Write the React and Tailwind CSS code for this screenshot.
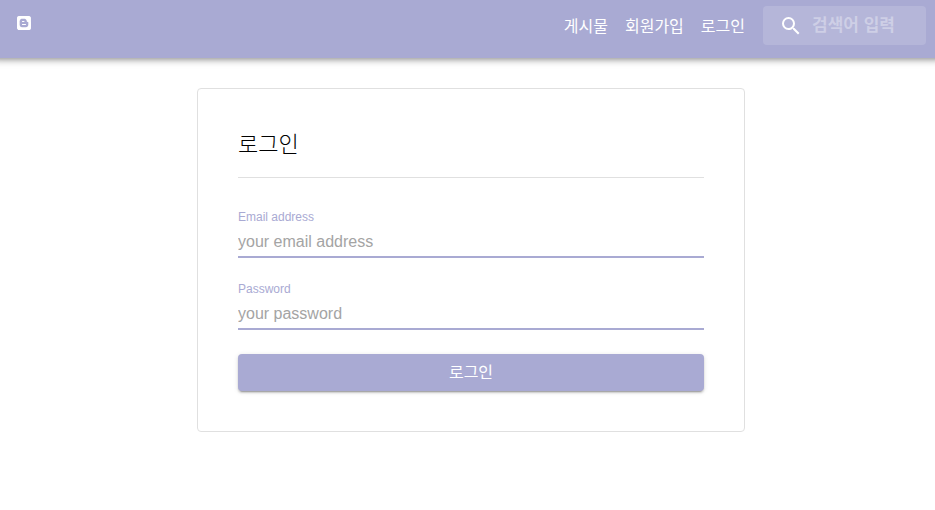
import { FaBlogger } from "react-icons/fa";
import { MdSearch } from "react-icons/md";

const links = ["게시물", "회원가입", "로그인"];

function Header() {
  return (
    <header className="-mx-2 flex h-[58px] items-start justify-between bg-[#a9aad3] pl-6 pr-[17px] text-white shadow-[0_2px_4px_-1px_rgba(0,0,0,0.2),0_4px_5px_0_rgba(0,0,0,0.14),0_1px_10px_0_rgba(0,0,0,0.12)]">
      <a href="#home" aria-label="Home" className="mt-[15px] block">
        <FaBlogger size={16} />
      </a>
      <div className="flex items-center gap-[18px] pt-1.5">
        <nav className="flex gap-[17px] pt-0.5">
          {links.map((label) => (
            <a key={label} href="#menu" className="text-base leading-6">
              {label}
            </a>
          ))}
        </nav>
        <label className="flex h-[39px] w-[163px] items-center gap-[9px] rounded bg-white/15 pl-4">
          <MdSearch size={24} className="shrink-0" />
          <input
            type="search"
            aria-label="검색"
            placeholder="검색어 입력"
            className="w-full min-w-0 bg-transparent text-[17px] font-bold leading-6 outline-none placeholder:text-white/35"
          />
        </label>
      </div>
    </header>
  );
}

function Field({ id, label, type, placeholder }) {
  return (
    <div className="flex flex-col">
      <label htmlFor={id} className="text-xs leading-4 text-[#a9aad3]">
        {label}
      </label>
      <input
        id={id}
        type={type}
        placeholder={placeholder}
        className="h-[33px] w-full border-b-2 border-[#a9aad3] bg-transparent pt-0.5 text-base text-black/85 outline-none placeholder:text-[#a4a4a4]"
      />
    </div>
  );
}

export default function App() {
  return (
    <div className="overflow-x-clip font-['Liberation_Sans','Noto_Sans_CJK_KR',sans-serif]">
      <Header />
      <main className="flex justify-center pl-[7px] pt-[30px]">
        <form className="w-full max-w-[548px] rounded border border-[#e0e0e0] p-10">
          <h1 className="mb-[31px] border-b border-[#e0e0e0] pb-4 text-[22px] font-light leading-8 text-black">
            로그인
          </h1>
          <div className="flex flex-col gap-[23px]">
            <Field id="email" label="Email address" type="email" placeholder="your email address" />
            <Field id="password" label="Password" type="password" placeholder="your password" />
          </div>
          <button
            type="button"
            className="mt-6 block h-[37px] w-full rounded bg-[#a9aad3] text-base text-white shadow-[0_3px_1px_-2px_rgba(0,0,0,0.2),0_2px_2px_0_rgba(0,0,0,0.14),0_1px_5px_0_rgba(0,0,0,0.12)]"
          >
            로그인
          </button>
        </form>
      </main>
    </div>
  );
}
